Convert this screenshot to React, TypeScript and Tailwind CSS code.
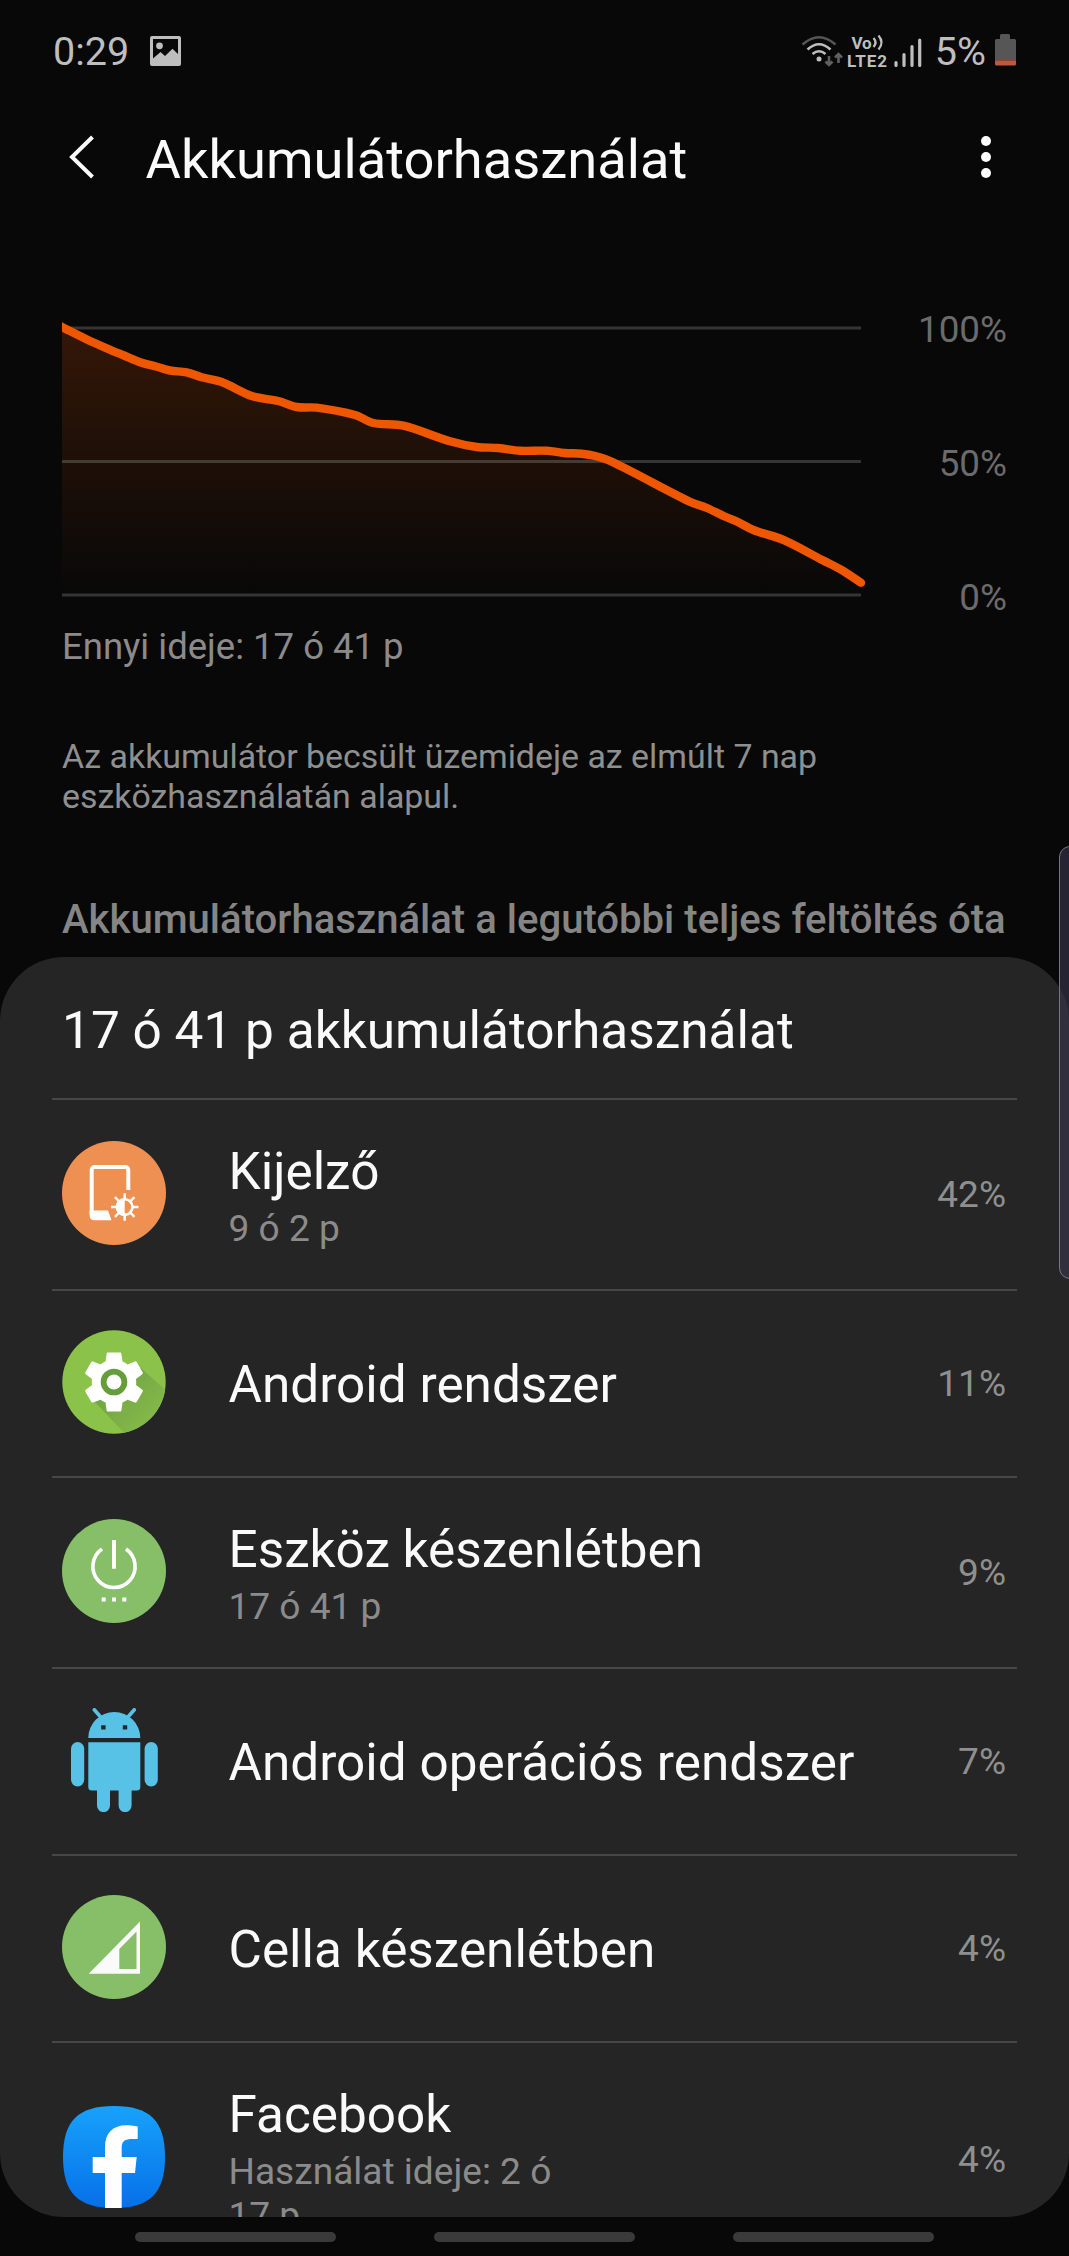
import type { ReactNode } from "react";

type Point = [number, number];

const levels: Point[] = [
  [-8, 17], [0, 21], [24, 33], [44.7, 42.3], [62, 49.5], [79.7, 56.7], [94, 60.5], [108, 64.5],
  [124.7, 66.3], [139.7, 71.3], [159.7, 76], [189.7, 90], [216.3, 95], [234.7, 101],
  [254.7, 101.7], [293, 109], [311.3, 117], [341.3, 119.7], [388, 135.3], [414.7, 141],
  [436.3, 142], [458, 144.7], [485, 144.7], [502.4, 147], [519.6, 147.7], [533.3, 150],
  [550.5, 156], [627.8, 195.7], [645, 202], [662.2, 210.3], [674.3, 215.3], [691.4, 224],
  [722.4, 234.3], [760.2, 254], [779, 263.7], [799, 276.7],
];

// Smooth curve through all the points
const toPath = (points: Point[]) => {
  let d = `M${points[0][0]} ${points[0][1]}`;
  for (let i = 0; i < points.length - 1; i++) {
    const p0 = points[Math.max(i - 1, 0)];
    const p1 = points[i];
    const p2 = points[i + 1];
    const p3 = points[Math.min(i + 2, points.length - 1)];
    const k = (p2[0] - p1[0]) / 3;
    const m1 = (p2[1] - p0[1]) / (p2[0] - p0[0]);
    const m2 = (p3[1] - p1[1]) / (p3[0] - p1[0]);
    d += `C${p1[0] + k} ${p1[1] + k * m1} ${p2[0] - k} ${p2[1] - k * m2} ${p2[0]} ${p2[1]}`;
  }
  return d;
};

const line = toPath(levels);

const BatteryChart = () => (
  <svg width="810" height="314" viewBox="0 0 810 314" fill="none">
    <defs>
      <linearGradient id="fade" x1="0" y1="22" x2="0" y2="289" gradientUnits="userSpaceOnUse">
        <stop offset="0" stopColor="#ef5600" stopOpacity="0.19" />
        <stop offset="1" stopColor="#ef5600" stopOpacity="0" />
      </linearGradient>
      <clipPath id="plot">
        <rect x="0" y="0" width="810" height="314" />
      </clipPath>
    </defs>
    <path d={`${line}V289H-8Z`} fill="url(#fade)" clipPath="url(#plot)" />
    <path d="M0 22H799M0 155.5H799M0 289H799" stroke="#fff" strokeOpacity="0.18" strokeWidth="3" />
    <path d={line} stroke="#ef5600" strokeWidth="8.4" strokeLinecap="round" clipPath="url(#plot)" />
  </svg>
);

const DisplayIcon = () => (
  <svg width="104" height="104" viewBox="0 0 104 104" fill="none">
    <circle cx="52" cy="52" r="52" fill="#ef9053" />
    <path d="M66.3 49V29a3 3 0 0 0-3-3H32.7a3 3 0 0 0-3 3V74" stroke="#fff" strokeWidth="4" />
    <path d="M27.7 69.5H46l3.5 9.8H32a4.3 4.3 0 0 1-4.3-4.3Z" fill="#fff" />
    <circle cx="62.7" cy="66" r="7.8" stroke="#fff" strokeWidth="2.6" />
    <path d="M62.7 57a9 9 0 0 0 0 18Z" fill="#fff" />
    <path
      d="M62.7 52.2v6M62.7 73.8v6M48.9 66h6M70.5 66h6M52.9 56.2l4 4M68.5 71.8l4 4M52.9 75.8l4-4M68.5 60.2l4-4"
      stroke="#fff"
      strokeWidth="2.4"
    />
  </svg>
);

const SystemIcon = () => (
  <svg width="104" height="104" viewBox="0 0 104 104">
    <defs>
      <linearGradient id="shade" x1="40" y1="40" x2="92" y2="92" gradientUnits="userSpaceOnUse">
        <stop offset="0" stopColor="#6f9e42" />
        <stop offset="1" stopColor="#84ba4a" />
      </linearGradient>
      <clipPath id="disc">
        <circle cx="52" cy="52" r="51.7" />
      </clipPath>
    </defs>
    <circle cx="52" cy="52" r="51.7" fill="#8bc34a" />
    <path d="M30 69L66 107H110V66L79 38Z" fill="url(#shade)" clipPath="url(#disc)" />
    <g transform="translate(16.5 16.5) scale(2.96)">
      <path
        fill="#fff"
        d="M19.43 12.98c.04-.32.07-.64.07-.98s-.03-.66-.07-.98l2.11-1.65c.19-.15.24-.42.12-.64l-2-3.46c-.12-.22-.39-.3-.61-.22l-2.49 1c-.52-.4-1.08-.73-1.69-.98l-.38-2.65C14.46 2.18 14.25 2 14 2h-4c-.25 0-.46.18-.49.42l-.38 2.65c-.61.25-1.17.59-1.69.98l-2.49-1c-.23-.09-.49 0-.61.22l-2 3.46c-.13.22-.07.49.12.64l2.11 1.65c-.04.32-.07.65-.07.98s.03.66.07.98l-2.11 1.65c-.19.15-.24.42-.12.64l2 3.46c.12.22.39.3.61.22l2.49-1c.52.4 1.08.73 1.69.98l.38 2.65c.03.24.24.42.49.42h4c.25 0 .46-.18.49-.42l.38-2.65c.61-.25 1.17-.59 1.69-.98l2.49 1c.23.09.49 0 .61-.22l2-3.46c.12-.22.07-.49-.12-.64l-2.11-1.65z"
      />
    </g>
    <circle cx="52" cy="52" r="13.3" fill="#659d3b" />
    <circle cx="52" cy="52" r="7.5" fill="#fff" />
  </svg>
);

const StandbyIcon = () => (
  <svg width="104" height="104" viewBox="0 0 104 104" fill="none">
    <circle cx="52" cy="52" r="52" fill="#87bf69" />
    <path d="M40 30.1a21.1 21.1 0 1 0 24 0" stroke="#fff" strokeWidth="3.6" />
    <path d="M52 21V49.7" stroke="#fff" strokeWidth="4" />
    <path d="M39.7 80.5h4M50 80.5h4M60.3 80.5h4" stroke="#fff" strokeWidth="4" />
  </svg>
);

const RobotIcon = () => (
  <svg width="104" height="104" viewBox="0 0 104 104" fill="#58c1e6">
    <path d="M26.3 30a26 26 0 0 1 52 0Z" />
    <path d="M32.3 1.8L40 10.5M72.3 1.8L64.6 10.5" stroke="#58c1e6" strokeWidth="3.6" strokeLinecap="round" />
    <path d="M26.3 34.3h52V79a3.5 3.5 0 0 1-3.5 3.5h-45a3.5 3.5 0 0 1-3.5-3.5Z" />
    <rect x="9" y="34" width="13.2" height="44.4" rx="6.6" />
    <rect x="82.6" y="34" width="13.2" height="44.4" rx="6.6" />
    <path d="M35 80h13v17.6a6.5 6.5 0 0 1-13 0ZM56.6 80h13v17.6a6.5 6.5 0 0 1-13 0Z" />
    <path d="M39.2 17.2h4.4v4.4h-4.4ZM60.8 17.2h4.4v4.4h-4.4Z" fill="#202a2e" />
  </svg>
);

const CellIcon = () => (
  <svg width="104" height="104" viewBox="0 0 104 104">
    <circle cx="52" cy="52" r="52" fill="#87bf69" />
    <path
      d="M26.7 78.7L78 26.5V78.7ZM57.3 54V74H74.5V36.5Z"
      fill="#fafafa"
      fillRule="evenodd"
    />
  </svg>
);

const FacebookIcon = () => (
  <svg width="104" height="104" viewBox="-1 -1 104 104">
    <defs>
      <linearGradient id="blue" x1="0" y1="0" x2="0" y2="1">
        <stop offset="0" stopColor="#17a2fb" />
        <stop offset="1" stopColor="#0670e8" />
      </linearGradient>
    </defs>
    <path
      d="M51 0C87 0 102 15 102 51S87 102 51 102 0 87 0 51 15 0 51 0Z"
      fill="url(#blue)"
    />
    <path
      d="M42 102V67H29.7V51H42V41.5C42 27 49.5 19.3 63.5 19.3c4 0 8.5.6 11.2 1.2V33H68c-7 0-9.3 3.5-9.3 8.5V51h15L72 67H58.7V102Z"
      fill="#fff"
    />
  </svg>
);

interface AppUsage {
  name: string;
  detail?: string;
  percent: string;
  icon: ReactNode;
  height: string;
}

const apps: AppUsage[] = [
  { name: "Kijelző", detail: "9 ó 2 p", percent: "42%", icon: <DisplayIcon />, height: "h-[191px]" },
  { name: "Android rendszer", percent: "11%", icon: <SystemIcon />, height: "h-[187px]" },
  { name: "Eszköz készenlétben", detail: "17 ó 41 p", percent: "9%", icon: <StandbyIcon />, height: "h-[191px]" },
  { name: "Android operációs rendszer", percent: "7%", icon: <RobotIcon />, height: "h-[187px]" },
  { name: "Cella készenlétben", percent: "4%", icon: <CellIcon />, height: "h-[187px]" },
  { name: "Facebook", detail: "Használat ideje: 2 ó 17 p", percent: "4%", icon: <FacebookIcon />, height: "h-[234px]" },
];

const StatusBar = () => (
  <div className="flex h-[104px] shrink-0 items-center px-[53px] text-[39.5px] text-[#bebebe]">
    <span className="leading-[48px]">0:29</span>
    <svg className="-mt-[3px] ml-[21px]" width="31" height="30" viewBox="0 0 31 30">
      <path
        d="M2 0H29a2 2 0 0 1 2 2V28a2 2 0 0 1-2 2H2a2 2 0 0 1-2-2V2a2 2 0 0 1 2-2ZM3 3V22.5L10.5 16 15 20 22.5 12.8 28 18V3Z"
        fill="#bebebe"
        fillRule="evenodd"
      />
      <circle cx="9.5" cy="9.8" r="3.4" fill="#bebebe" />
    </svg>
    <div className="ml-auto flex items-center">
      <svg className="-mt-[2px]" width="43" height="34" viewBox="0 0 43 34" fill="none" strokeWidth="2.6">
        <path d="M1.5 10.5Q18 -4 34.5 10.5" stroke="#555" />
        <path d="M6.5 15.5Q18 5 29.5 15.5M11.5 20Q18 14.5 24.5 20" stroke="#bebebe" />
        <circle cx="18" cy="25" r="2.5" fill="#bebebe" />
        <path d="M28 22V31M24.5 27.5L28 31 31.5 27.5M37.5 29V20M34 23.5L37.5 20 41 23.5" stroke="#606060" />
      </svg>
      <svg className="-mt-[2px] ml-[3px]" width="41" height="38" viewBox="0 0 41 38" fontWeight="700">
        <text x="4.5" y="16.5" fontSize="17" fill="#bebebe" textLength="20">Vo</text>
        <path d="M26.5 6Q30.500 10.500 26.5 15M31.500 3.500Q37.500 10.500 31.500 17.500" stroke="#bebebe" strokeWidth="2.3" fill="none" />
        <text x="0" y="34.5" fontSize="17" fill="#bebebe" textLength="40">LTE2</text>
      </svg>
      <svg className="ml-[6.5px]" width="28" height="34" viewBox="0 0 28 34">
        <path
          d="M2 27.5V30.5M10 19.5V30.5M18 11.5V30.5M25.7 5V30.5"
          stroke="#bebebe"
          strokeWidth="3.2"
          strokeLinecap="round"
        />
      </svg>
      <span className="ml-[12.5px] leading-[48px]">5%</span>
      <svg className="-mt-[4px] ml-[9px]" width="21" height="32" viewBox="0 0 21 32">
        <path
          d="M6.5 0h7a1.5 1.5 0 0 1 1.5 1.5V5h4.5A1.5 1.5 0 0 1 21 6.5V26H0V6.5A1.5 1.5 0 0 1 1.5 5H5V1.5A1.5 1.5 0 0 1 6.5 0Z"
          fill="#565656"
        />
        <path d="M0 26.3H21V30a1.5 1.5 0 0 1-1.5 1.5h-18A1.5 1.5 0 0 1 0 30Z" fill="#bb5b3d" />
      </svg>
    </div>
  </div>
);

const App = () => {
  return (
    <div className="relative flex h-[2256px] w-[1069px] flex-col overflow-hidden bg-[#080808] font-['Roboto',sans-serif]">
      <StatusBar />

      <header className="flex h-[113px] shrink-0 items-center pr-[78px] pl-[68px]">
        <svg className="-mt-[7px]" width="27" height="44" viewBox="0 0 27 44" fill="none">
          <path d="M24.5 2L4 22 24.5 42" stroke="#fafafa" strokeWidth="4" />
        </svg>
        <h1 className="ml-[50.5px] text-[54.3px] leading-none text-[#fafafa]">Akkumulátorhasználat</h1>
        <svg className="-mt-[7px] ml-auto" width="10" height="44" viewBox="0 0 10 44" fill="#fff">
          <circle cx="5" cy="6" r="5" />
          <circle cx="5" cy="22" r="5" />
          <circle cx="5" cy="38" r="5" />
        </svg>
      </header>

      <section className="shrink-0 px-[62px] pt-[89px]">
        <div className="flex justify-between">
          <BatteryChart />
          <div className="flex h-[315px] flex-col justify-between pt-px text-right text-[36.8px] leading-[46px] text-[#6b6b6b]">
            <span>100%</span>
            <span>50%</span>
            <span>0%</span>
          </div>
        </div>
        <p className="mt-1 text-[36.5px] leading-[44px] text-[#8b8b8b]">Ennyi ideje: 17 ó 41 p</p>
        <p className="mt-[68px] w-[800px] text-[33.9px] leading-[40px] text-[#8f8f8f]">
          Az akkumulátor becsült üzemideje az elmúlt 7 nap eszközhasználatán alapul.
        </p>
        <h2 className="mt-[80px] text-[40.1px] leading-[46px] font-medium whitespace-nowrap text-[#858585]">
          Akkumulátorhasználat a legutóbbi teljes feltöltés óta
        </h2>
      </section>

      <section className="mt-[14px] h-[1260px] shrink-0 overflow-hidden rounded-[64px] bg-[#252525] px-[52px]">
        <h3 className="flex h-[141px] items-center px-[10px] pt-[7px] text-[51.4px] text-[#fafafa]">
          17 ó 41 p akkumulátorhasználat
        </h3>
        {apps.map((app) => (
          <div
            key={app.name}
            className={`flex items-center border-t-[2.5px] border-[#474747] pr-[11px] pl-[10px] ${app.height}`}
          >
            <div className="-mt-[4px] shrink-0">{app.icon}</div>
            <div className={`ml-[62.5px] flex-1 ${app.detail ? "-mt-[2px]" : "pt-[2px]"}`}>
              <div className="text-[51.3px] leading-[71px] text-[#fafafa]">{app.name}</div>
              {app.detail && (
                <div className="w-[350px] text-[37.1px] leading-[44px] text-[#8b8b8b]">{app.detail}</div>
              )}
            </div>
            <span className="pt-px text-[37px] leading-[44px] text-[#8f8f8f]">{app.percent}</span>
          </div>
        ))}
      </section>

      <nav className="flex shrink-0 justify-between px-[135px] pt-[15px]">
        <div className="h-[10px] w-[201px] rounded-full bg-[#3a3a3a]" />
        <div className="h-[10px] w-[201px] rounded-full bg-[#3a3a3a]" />
        <div className="h-[10px] w-[201px] rounded-full bg-[#3a3a3a]" />
      </nav>

      {/* Edge panel handle */}
      <div className="absolute top-[846px] -right-[12px] h-[433px] w-[22px] rounded-[12px] border border-[#77757f] bg-[#3a3650]/60" />
    </div>
  );
};

export default App;
